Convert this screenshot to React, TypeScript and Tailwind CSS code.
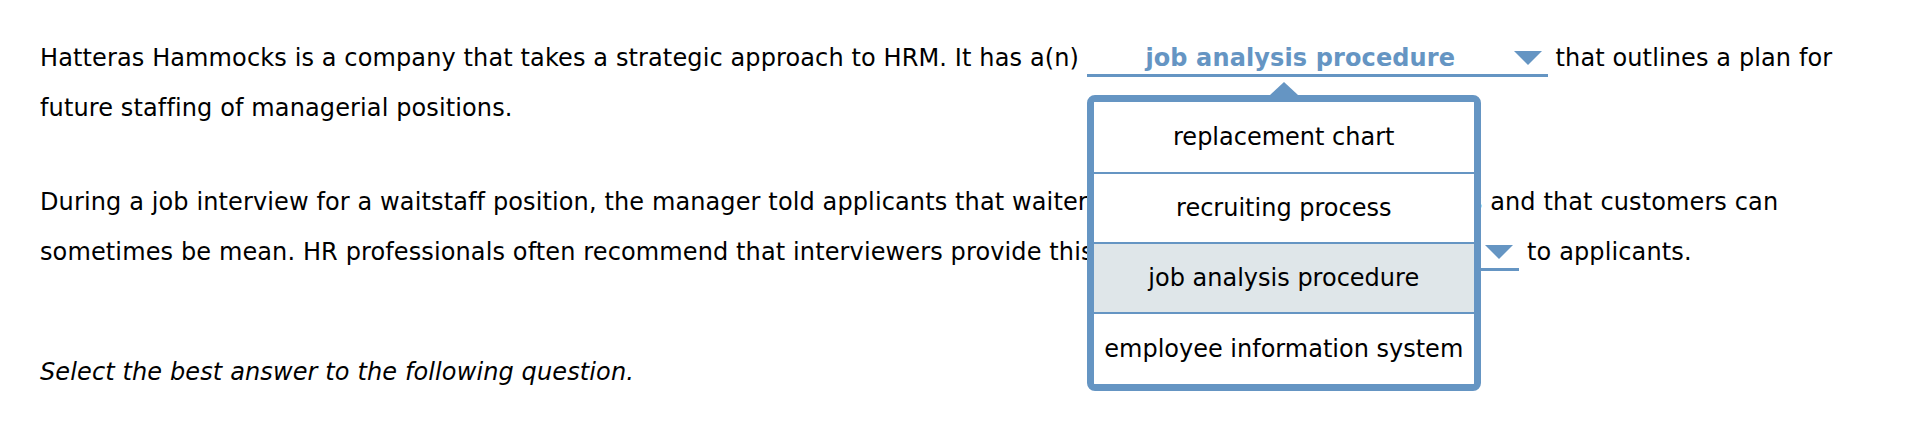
import { useState } from 'react';

const options = [
  'replacement chart',
  'recruiting process',
  'job analysis procedure',
  'employee information system',
];

const Caret = () => (
  <svg width="28" height="14" viewBox="0 0 28 14" className="shrink-0">
    <path d="M0 0 H28 L14 14 Z" fill="#6595c3" />
  </svg>
);

type DropProps = {
  value: string;
  open?: boolean;
  width: string;
  onPick?: (v: string) => void;
};

const Dropdown = ({ value, open, width, onPick }: DropProps) => {
  return (
    <span className={`relative inline-block align-baseline ${width} border-b-[3px] border-[#6595c3] leading-[32px]`}>
      <span className="flex items-center">
        <span className="flex-1 text-center font-bold text-[#6595c3] whitespace-nowrap">{value || '\u00a0'}</span>
        <span className="mr-[6px]">
          <Caret />
        </span>
      </span>

      {open && (
        <span className="absolute left-0 top-[calc(100%+21px)] z-10 block w-[394px] tracking-normal">
          {/* little pointer on top of the menu */}
          <span className="absolute left-1/2 -translate-x-1/2 -top-[13px] block w-0 h-0 border-l-[14px] border-r-[14px] border-b-[13px] border-l-transparent border-r-transparent border-b-[#6595c3]" />
          <span className="block border-[7px] border-[#6595c3] rounded-[8px] bg-white overflow-hidden">
            {options.map((opt, i) => (
              <span
                key={opt}
                onClick={() => onPick && onPick(opt)}
                className={`flex h-[70px] items-center justify-center font-normal text-black whitespace-nowrap cursor-pointer ${
                  i > 0 ? 'border-t-2 border-[#6595c3]' : ''
                } ${i === options.length - 1 ? 'h-[72px]' : ''} ${opt === value ? 'bg-[#dfe6e9]' : 'bg-white'}`}
              >
                {opt}
              </span>
            ))}
          </span>
        </span>
      )}
    </span>
  );
};

export default function App() {
  const [first, setFirst] = useState('job analysis procedure');

  return (
    <div className="min-h-[430px] bg-white px-[40px] pt-[33px] text-[24px] leading-[50px] tracking-[0.12px] text-black font-['DejaVu_Sans',sans-serif]">
      <p>
        Hatteras Hammocks is a company that takes a strategic approach to HRM. It has a(n){' '}
        <Dropdown value={first} width="w-[461px]" open onPick={setFirst} />{' '}
        that outlines a plan for future staffing of managerial positions.
      </p>

      <p className="mt-[44px]">
        During a job interview for a waitstaff position, the manager told applicants that waiters
        will often work long, late hours and that customers can sometimes be mean. HR professionals
        often recommend that interviewers provide this <Dropdown value="" width="w-[418px]" /> to
        applicants.
      </p>

      <p className="mt-[70px] italic">Select the best answer to the following question.</p>
    </div>
  );
}
